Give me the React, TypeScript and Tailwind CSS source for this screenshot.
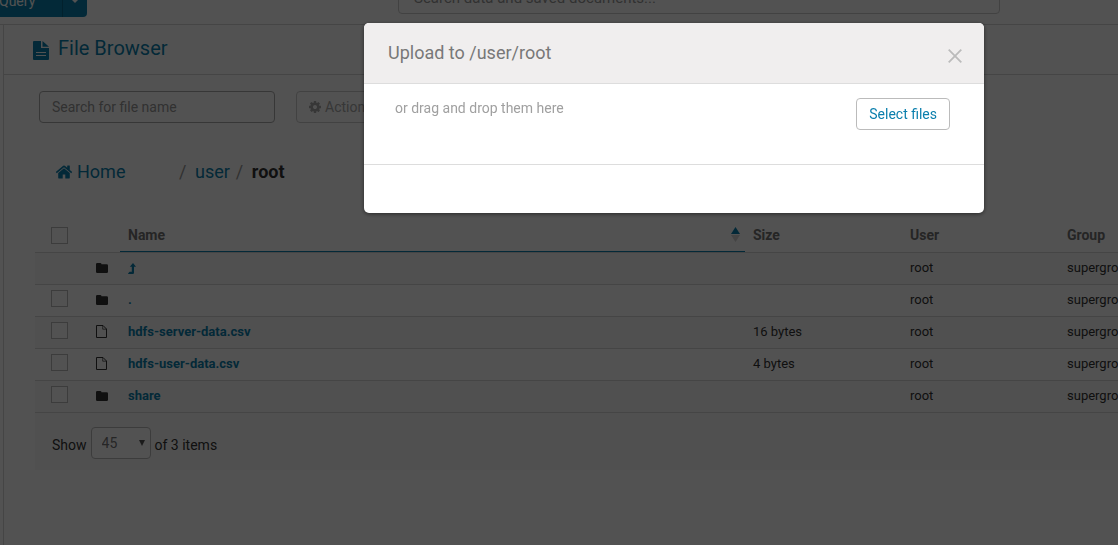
import { useState } from "react";

type Entry = {
  name: string;
  kind: "folder" | "file";
  size?: string;
  selectable: boolean;
  parent?: boolean;
};

const entries: Entry[] = [
  { name: "Parent folder", kind: "folder", selectable: false, parent: true },
  { name: ".", kind: "folder", selectable: true },
  { name: "hdfs-server-data.csv", kind: "file", size: "16 bytes", selectable: true },
  { name: "hdfs-user-data.csv", kind: "file", size: "4 bytes", selectable: true },
  { name: "share", kind: "folder", selectable: true },
];

function DocumentIcon() {
  return (
    <svg className="h-[19px] w-4" viewBox="0 0 16 19" fill="currentColor" aria-hidden="true">
      <path d="M1 0H8V7H16V18Q16 19 15 19H1Q0 19 0 18V1Q0 0 1 0ZM3 11V12H13V11ZM3 14V15H13V14Z" fillRule="evenodd" />
      <path d="M9.5 0L16 5.8H9.5Z" />
    </svg>
  );
}

function CogIcon() {
  return (
    <svg className="size-[14px]" viewBox="0 0 1792 1792" fill="currentColor" aria-hidden="true">
      <path d="M1152 896q0-106-75-181t-181-75-181 75-75 181 75 181 181 75 181-75 75-181zm512-109v222q0 12-8 23t-20 13l-185 28q-19 54-39 91 35 50 107 138 10 12 10 25t-9 23q-27 37-99 108t-94 71q-12 0-26-9l-138-108q-44 23-91 38-16 136-29 186-7 28-36 28h-222q-14 0-24.5-8.5t-11.5-21.5l-28-184q-49-16-90-37l-141 107q-10 9-25 9-14 0-25-11-126-114-165-168-7-10-7-23 0-12 8-23 15-21 51-66.5t54-70.5q-27-50-41-99l-183-27q-13-2-21-12.5t-8-23.5v-222q0-12 8-23t19-13l186-28q14-46 39-92-40-57-107-138-10-12-10-24 0-10 9-23 26-36 98.5-107.5t94.5-71.5q13 0 26 10l138 107q44-23 91-38 16-136 29-186 7-28 36-28h222q14 0 24.5 8.5t11.5 21.5l28 184q49 16 90 37l142-107q9-9 24-9 13 0 25 10 129 119 165 170 7 8 7 22 0 12-8 23-15 21-51 66.5t-54 70.5q26 50 41 98l183 28q13 2 21 12.5t8 23.5z" />
    </svg>
  );
}

function HomeIcon() {
  return (
    <svg className="size-[18px]" viewBox="0 0 1792 1792" fill="currentColor" aria-hidden="true">
      <path d="M1472 992v480q0 26-19 45t-45 19h-384v-384h-256v384h-384q-26 0-45-19t-19-45v-480q0-1 .5-3t.5-3l575-474 575 474q1 2 1 6zm223-69l-62 74q-8 9-21 11h-3q-13 0-21-7l-692-577-692 577q-12 8-24 7-13-2-21-11l-62-74q-8-10-7-23.5t11-21.5l719-599q32-26 76-26t76 26l244 204v-195q0-14 9-23t23-9h192q14 0 23 9t9 23v408l219 182q10 8 11 21.5t-7 23.5z" />
    </svg>
  );
}

function FolderIcon() {
  return (
    <svg className="h-[10px] w-3" viewBox="0 0 12 10" fill="currentColor" aria-label="Folder">
      <path d="M1.3 0H4.2Q5.5 0 5.5 1.3H10.7Q12 1.3 12 2.6V8.7Q12 10 10.7 10H1.3Q0 10 0 8.7V1.3Q0 0 1.3 0Z" />
    </svg>
  );
}

function FileIcon() {
  return (
    <svg className="h-[13px] w-[11px]" viewBox="0 0 11 13" fill="none" stroke="currentColor" aria-label="File">
      <path d="M0.5 0.5H7L10.5 4V12.5H0.5Z" />
      <path d="M6.7 0.5V4.2H10.5" strokeOpacity="0.7" />
    </svg>
  );
}

function LevelUpIcon() {
  return (
    <svg className="h-[11px] w-2" viewBox="0 0 8 11" fill="currentColor" aria-hidden="true">
      <path d="M5 0L8 3.7H6V9.7Q6 11 4.8 11H0.4L0 10.6L1.6 8.8H3.8V3.7H1.8Z" />
    </svg>
  );
}

function SortIcon() {
  return (
    <svg className="h-[15px] w-[9px]" viewBox="0 0 9 15" aria-hidden="true">
      <path d="M4.5 0L9 7H0Z" fill="#0b7fad" />
      <path d="M4.5 15L9 8H0Z" fill="#d3d3d3" />
    </svg>
  );
}

function TickBox({ label }: { label: string }) {
  return (
    <input
      type="checkbox"
      aria-label={label}
      className="block size-[17px] appearance-none border border-[#bbb] bg-white checked:bg-[#0b7fad]"
    />
  );
}

function TopBar() {
  return (
    <header className="flex h-[25px] items-end overflow-hidden border-b border-[#d5d5d5] pr-[118px]">
      <div className="-ml-3 mb-[7px] flex h-8 w-[99px] shrink-0 overflow-hidden rounded-[4px] bg-[#0b7fad] text-sm text-white">
        <button type="button" className="w-[74px] pl-[11px] text-left">Query</button>
        <button type="button" aria-label="More query types" className="flex flex-1 items-center justify-center border-l border-[#07678d]">
          <svg className="h-1 w-2" viewBox="0 0 8 4" fill="currentColor" aria-hidden="true">
            <path d="M0 0H8L4 4Z" />
          </svg>
        </button>
      </div>
      <input
        type="search"
        aria-label="Search data and saved documents"
        placeholder="Search data and saved documents..."
        className="mb-[10px] ml-[311px] h-8 min-w-0 flex-1 rounded-[4px] border border-[#ccc] px-[15px] text-[15px] placeholder:text-[#999]"
      />
    </header>
  );
}

function FileTable() {
  return (
    <div className="overflow-hidden">
      <table className="w-[calc(100%+98px)] table-fixed border-separate border-spacing-0 text-left text-[13px] text-[#333]">
        <colgroup>
          <col className="w-[53px]" />
          <col className="w-8" />
          <col />
          <col className="w-[157px]" />
          <col className="w-[157px]" />
          <col className="w-[157px]" />
        </colgroup>
        <thead className="text-sm text-[#737373]">
          <tr className="h-[35px] *:border-b *:border-[#d5d5d5]">
            <th className="pl-4"><TickBox label="Select all" /></th>
            <th />
            <th aria-sort="ascending" className="p-0 font-bold">
              <div className="flex h-[34px] items-center justify-between border-b border-[#0b7fad] pr-[5px] pl-2">
                Name
                <SortIcon />
              </div>
            </th>
            <th className="px-2 font-bold">Size</th>
            <th className="px-2 font-bold">User</th>
            <th className="px-2 font-bold">Group</th>
          </tr>
        </thead>
        <tbody>
          {entries.map((entry) => (
            <tr key={entry.name} className="h-8 *:border-b *:border-[#d5d5d5] odd:bg-[#f9f9f9]">
              <td className="pb-1 pl-4">{entry.selectable && <TickBox label={`Select ${entry.name}`} />}</td>
              <td className="pb-[2px] pl-2">{entry.kind === "folder" ? <FolderIcon /> : <FileIcon />}</td>
              <td className="pb-px pl-2 font-bold text-[#0b7fad]">
                {entry.parent ? (
                  <a href="#parent" aria-label="Up one level" className="block"><LevelUpIcon /></a>
                ) : (
                  <a href={`#${entry.name}`}>{entry.name}</a>
                )}
              </td>
              <td className="px-2 pb-px">{entry.size}</td>
              <td className="px-2 pb-px">root</td>
              <td className="px-2 pb-px">supergroup</td>
            </tr>
          ))}
        </tbody>
      </table>
    </div>
  );
}

function UploadDialog({ onClose }: { onClose: () => void }) {
  return (
    <div className="fixed inset-0 z-10 flex items-start justify-center bg-black/68 pt-[23px] pl-[230px]">
      <section
        role="dialog"
        aria-modal="true"
        aria-labelledby="upload-title"
        className="w-[620px] overflow-hidden rounded-[5px] bg-white shadow-[0_1px_4px_rgba(0,0,0,0.5)]"
      >
        <div className="flex h-[61px] items-center justify-between border-b border-[#ddd] bg-[#f0eeee] pr-[22px] pl-6">
          <h2 id="upload-title" className="text-lg text-[#787878]">Upload to /user/root</h2>
          <button type="button" aria-label="Close" onClick={onClose} className="mt-[5px] text-[#bbb]">
            <svg className="size-[14px]" viewBox="0 0 14 14" stroke="currentColor" strokeWidth="1.8" aria-hidden="true">
              <path d="M0.7 0.7L13.3 13.3M13.3 0.7L0.7 13.3" />
            </svg>
          </button>
        </div>
        <div className="flex h-[81px] items-start justify-between border-b border-[#ddd] pt-[14px] pr-[34px] pl-[31px] text-sm">
          <p className="text-[#a0a0a0]">or drag and drop them here</p>
          <button type="button" className="h-8 rounded-[4px] border border-[#bbb] px-3 text-[#0b7fad]">
            Select files
          </button>
        </div>
        <div className="h-12" />
      </section>
    </div>
  );
}

export default function App() {
  const [open, setOpen] = useState(true);
  return (
    <div className="flex min-h-screen flex-col overflow-hidden bg-white font-[Roboto,sans-serif] text-sm text-[#333]">
      <TopBar />
      <main className="ml-[3px] flex-1 border-l border-[#d5d5d5]">
        <div className="flex h-[50px] items-center gap-[9px] border-b border-[#d5d5d5] pb-[3px] pl-[29px] text-[#0b7fad]">
          <span className="mt-1"><DocumentIcon /></span>
          <h1 className="text-xl">File Browser</h1>
        </div>
        <div className="flex gap-[21px] pt-4 pl-[35px]">
          <input
            type="text"
            aria-label="Search for file name"
            placeholder="Search for file name"
            className="h-8 w-[236px] rounded-[4px] border border-[#aaa] px-3 placeholder:text-[#999]"
          />
          <button type="button" disabled className="flex h-8 items-center gap-[3px] rounded-[4px] border border-[#ccc] px-[11px] text-[#aaa]">
            <CogIcon />
            Actions
          </button>
        </div>
        <nav aria-label="Path" className="flex h-[95px] items-center pt-[2px] pl-[51px] text-lg">
          <a href="#home" className="flex w-[124px] items-center gap-1 text-[#0b7fad]">
            <HomeIcon />
            Home
          </a>
          <span className="w-4 text-[#999]">/</span>
          <a href="#user" className="text-[#0b7fad]">user</a>
          <span className="w-[22px] pl-[6px] text-[#999]">/</span>
          <span className="font-bold">root</span>
        </nav>
        <div className="ml-[31px]">
          <FileTable />
          <div className="flex h-[57px] items-center gap-1 bg-[#f9f9f9] pt-[2px] pl-[17px]">
            <label htmlFor="page-size" className="pt-1">Show</label>
            <span className="grid items-center">
              <select
                id="page-size"
                defaultValue="45"
                className="col-start-1 row-start-1 h-8 w-[60px] appearance-none rounded-[4px] border border-[#bbb] bg-white px-[10px] text-[#777]"
              >
                <option>15</option>
                <option>30</option>
                <option>45</option>
                <option>60</option>
              </select>
              <svg className="pointer-events-none col-start-1 row-start-1 mr-[6px] h-[6px] w-[6px] justify-self-end" viewBox="0 0 6 6" fill="#555" aria-hidden="true">
                <path d="M0 0H6L3 6Z" />
              </svg>
            </span>
            <span className="pt-1">of 3 items</span>
          </div>
        </div>
      </main>
      {open && <UploadDialog onClose={() => setOpen(false)} />}
    </div>
  );
}
